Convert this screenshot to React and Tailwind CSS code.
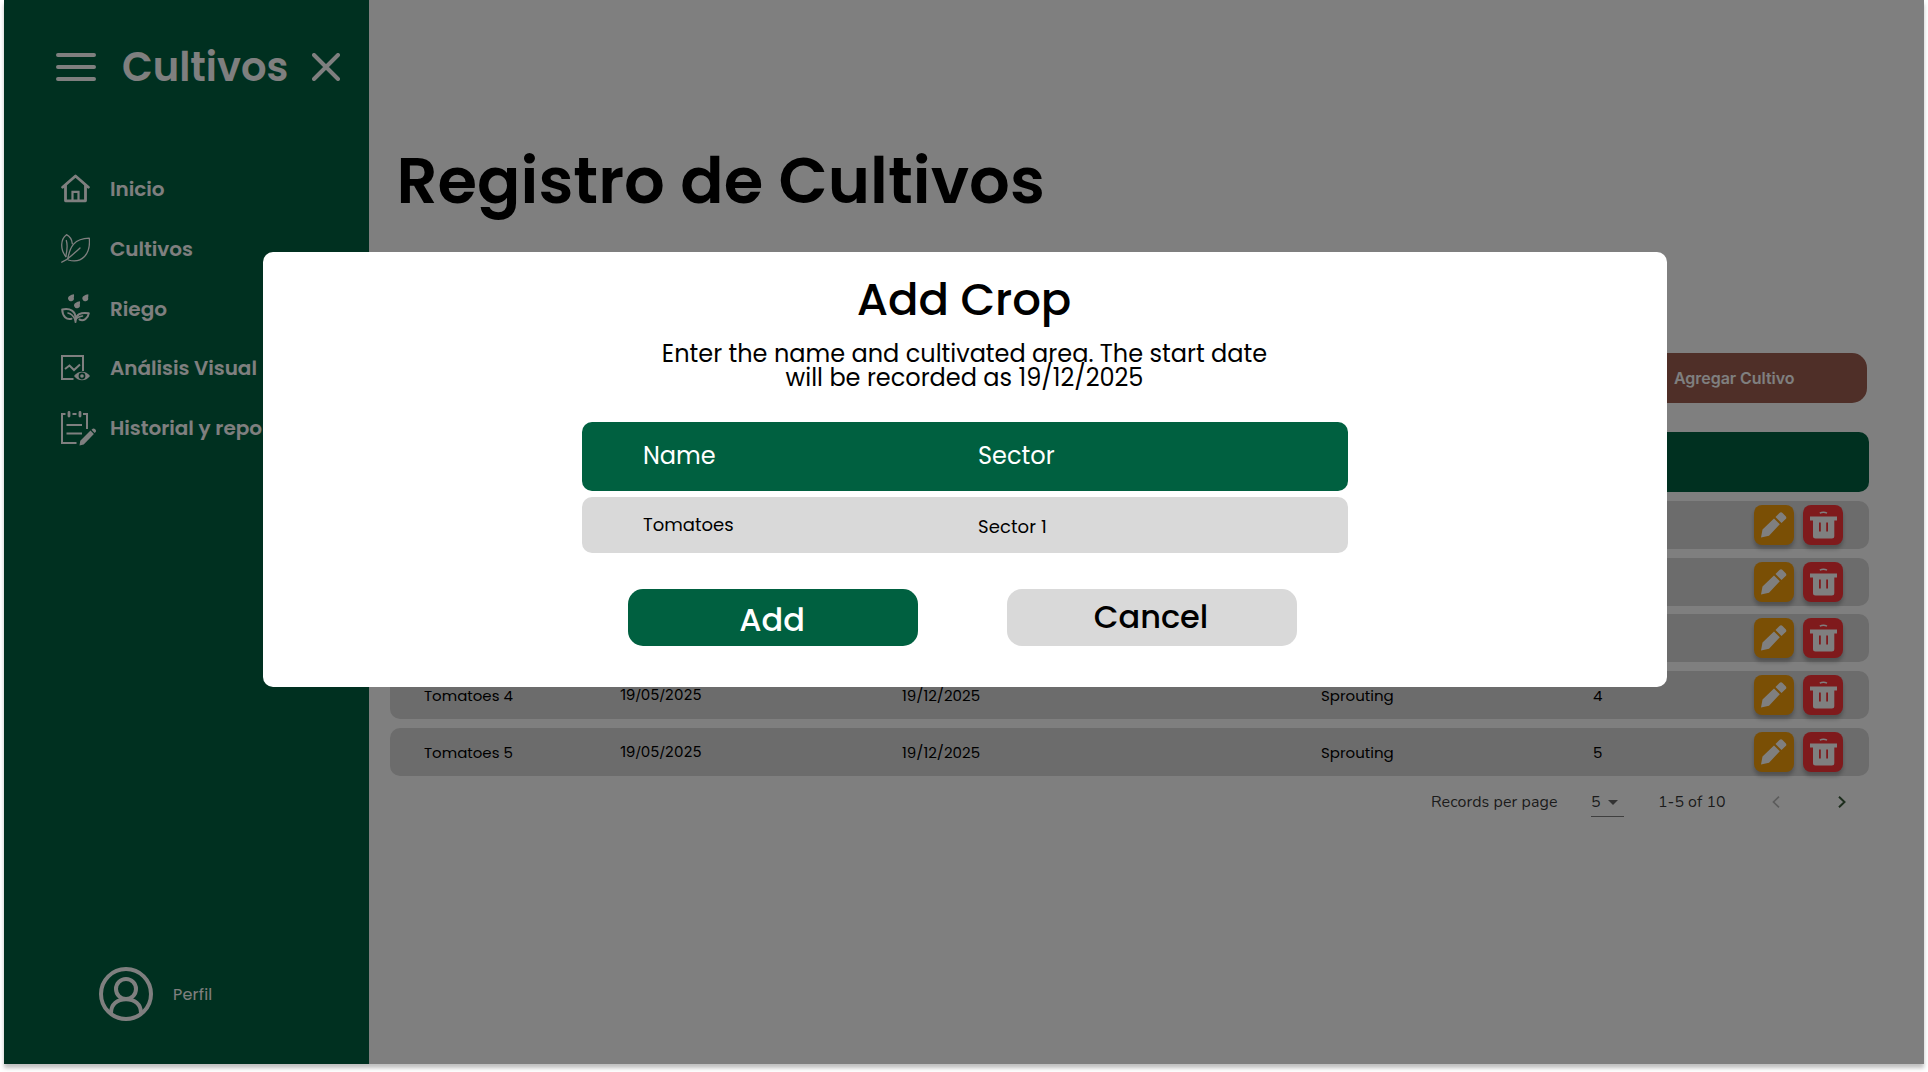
const rows = [1, 2, 3, 4, 5];

function Hamburger() {
  return (
    <svg className="h-7 w-10" viewBox="0 0 40 28" stroke="white" strokeWidth="4" strokeLinecap="round">
      <path d="M2 2H38M2 14H38M2 26H38" />
    </svg>
  );
}

function Close() {
  return (
    <svg className="h-7 w-7" viewBox="0 0 28 28" stroke="white" strokeWidth="4" strokeLinecap="round">
      <path d="M2 2L26 26M26 2L2 26" />
    </svg>
  );
}

function House() {
  return (
    <svg className="h-[29px] w-[29px]" viewBox="0 0 29 29" fill="none" stroke="white" strokeWidth="2.8" strokeLinejoin="round" strokeLinecap="round">
      <path d="M1.6 13.2L14.5 2L27.4 13.2" />
      <path d="M4.5 11.5V26.8H24.5V11.5" />
      <path d="M11.500 26V17.800H17.500V26" strokeWidth="2.2" strokeLinejoin="miter" />
    </svg>
  );
}

function Leaves() {
  return (
    <svg className="h-[29px] w-[29px]" viewBox="0 0 29 29" fill="none" stroke="white" strokeWidth="1.3" strokeLinecap="round" strokeLinejoin="round">
      <path d="M.8 28.2C4.5 26.5 7.5 24.5 10 22C13.5 19 16.5 16.5 19 14" />
      <path d="M6.8 24.5C9 13 13 4.5 28.3 4.2C29.8 20 21 30 7.2 26" />
      <path d="M4.8 22.5C-1 15.5-.5 5 5.5.7C9 2.5 11 6 11.3 9.8" />
      <path d="M5.3 6.5C6.8 11 6.5 15 4.8 22.5" />
    </svg>
  );
}

function Irrigation() {
  return (
    <svg className="h-[29px] w-[29px]" viewBox="0 0 29 29" fill="none" stroke="white" strokeWidth="2" strokeLinecap="round" strokeLinejoin="round">
      <g fill="white" stroke="none">
        <path d="M13 .2Q13.200 2 12.800 3.500A2.900 2.900 0 1 1 8.400 1.900Q10.500.6 13 .2Z" />
        <path d="M27.300 .2Q27.500 2 27.100 3.500A2.900 2.900 0 1 1 22.700 1.900Q24.800.6 27.300 .2Z" />
        <path d="M19 7.200Q19.200 9 18.800 10.500A2.900 2.900 0 1 1 14.400 8.900Q16.500 7.600 19 7.200Z" />
      </g>
      <path d="M14.5 28V24C14.5 17 9.5 14 1.2 15.5C1.500 22.500 5.500 26 10.500 24.800" />
      <path d="M14.5 26C15 21 19.5 17.7 27.8 19.300C27 24.500 22.500 27.500 18.500 25.500" />
      <path d="M7 19C9.5 19.5 12.5 22 14.3 26C16 23.5 18.500 22.300 21.500 22" strokeWidth="1.6" />
    </svg>
  );
}

function ChartEye() {
  return (
    <svg className="h-[27px] w-[29px]" viewBox="0 0 29 27" fill="none" stroke="white" strokeWidth="2">
      <path d="M12.5 24H1V1H22V16" />
      <path d="M4 14L8.500 10.500L13 15L19 9.500" />
      <path d="M13 21C17 15.300 25 15.300 29 21C25 26.700 17 26.700 13 21Z" fill="white" stroke="none" />
      <circle cx="21" cy="21" r="2.6" stroke="#006040" strokeWidth="1.6" />
    </svg>
  );
}

function NotePencil() {
  return (
    <svg className="h-[35px] w-[35px]" viewBox="0 0 35 35" fill="none" stroke="white" strokeWidth="2">
      <path d="M4.5 3H1V32H15.500M11.500 3H15.500M22 3H26V18" />
      <path d="M5.5 14H21M5.500 22.500H21" />
      <path d="M8 1.500V5M19 1.500V5" strokeWidth="2.8" strokeLinecap="round" />
      <path d="M18.5 34.500L19.300 29.800L29.500 19.600L32.900 23L22.700 33.500ZM30.500 18.800L31.700 17.700Q33 17 34.200 18.300Q35.500 19.600 34.700 20.900L33.600 22Z" fill="white" stroke="none" />
    </svg>
  );
}

function Profile() {
  return (
    <svg className="h-[54px] w-[54px]" viewBox="0 0 54 54" fill="none" stroke="white" strokeWidth="4">
      <circle cx="27" cy="27" r="25" />
      <circle cx="27" cy="22" r="10" />
      <path d="M12 46C12 37 18.5 32.3 27 32.3S42 37 42 46" />
    </svg>
  );
}

function Pencil() {
  return (
    <svg className="h-[26px] w-[26px]" viewBox="0 0 26 26" fill="white">
      <path d="M0 25.500L1.500 17.500L13 6.500L18.800 12.300L8 23.800ZM14.500 5L18.500 1Q20-.3 21.500 1L24.700 4.200Q26 5.700 24.700 7L20.500 11Z" />
    </svg>
  );
}

function Trash() {
  return (
    <svg className="h-[28px] w-[27px]" viewBox="0 0 27 28" fill="white">
      <path d="M9.8 2.2Q13.400.2 17 2.200" fill="none" stroke="white" strokeWidth="1.5" />
      <path fillRule="evenodd" d="M0 5.500H27V9.500H24.300V25Q24.300 27.500 21.800 27.500H5.500Q3 27.500 3 25V9.500H0ZM9 11.500V20.500H10.800V11.500ZM16.200 11.500V20.500H18V11.500Z" />
    </svg>
  );
}

const nav = [
  { icon: House, label: "Inicio" },
  { icon: Leaves, label: "Cultivos" },
  { icon: Irrigation, label: "Riego" },
  { icon: ChartEye, label: "Análisis Visual" },
  { icon: NotePencil, label: "Historial y reportes" },
];

function Sidebar() {
  return (
    <aside className="flex h-full w-[365px] shrink-0 flex-col bg-[#006040] text-white">
      <div className="mt-[47px] flex h-10 items-center pl-[52px]">
        <Hamburger />
        <h2 className="ml-[26px] w-[190px] whitespace-nowrap text-[40px] leading-10 font-semibold">Cultivos</h2>
        <Close />
      </div>
      <nav className="mt-[72px] flex flex-col pl-[57px]">
        {nav.map(({ icon: Icon, label }) => (
          <a key={label} className="flex h-[59.8px] items-center nth-3:pt-px">
            <span className="flex w-[49px]"><Icon /></span>
            <span className="whitespace-nowrap text-xl font-semibold tracking-[-0.03px]">{label}</span>
          </a>
        ))}
      </nav>
      <div className="mt-auto mb-[43px] flex items-center pl-[95px]">
        <Profile />
        <span className="ml-5 pt-0.5 text-base tracking-[0.2px]">Perfil</span>
      </div>
    </aside>
  );
}

function CropTable() {
  return (
    <div className="w-[1479px]">
      <div className="flex h-[60px] rounded-[10px] bg-[#006040]" />
      {rows.map((n) => (
        <div key={n} className="mt-[8.8px] flex h-12 items-center rounded-[10px] bg-[#d9d9d9] pl-[34px] text-[15px] text-black">
          <span className="w-[196px] pt-[3px]">Tomatoes {n}</span>
          <span className="w-[282px] font-['Inter']">19/05/2025</span>
          <span className="w-[419px] pt-[3px]">19/12/2025</span>
          <span className="w-[271px] pt-[3px]">Sprouting</span>
          <span className="w-[162px] pt-0.5 pl-px">{n}</span>
          <button className="flex h-10 w-10 items-center justify-center rounded-lg bg-[#f59e0b] shadow-[0_4px_4px_rgba(0,0,0,0.25)]"><Pencil /></button>
          <button className="ml-[9px] flex h-10 w-10 items-center justify-center rounded-lg bg-[#ff3439] shadow-[0_4px_4px_rgba(0,0,0,0.25)]"><Trash /></button>
        </div>
      ))}
    </div>
  );
}

function Pager() {
  return (
    <div className="mt-[9px] flex h-8 items-center pl-[1041px] font-['Nunito','Nunito_Sans'] text-base text-black/80">
      <span className="w-40 pt-0.5 tracking-[0.08px]">Records per page</span>
      <span className="mt-1 mr-[34px] flex h-7 w-[33px] items-center justify-between border-b border-black/50 pr-1.5">
        <span className="pb-px">5</span>
        <svg className="h-[5px] w-2.5" viewBox="0 0 10 5" fill="black" fillOpacity="0.6"><path d="M0 0H10L5 5Z" /></svg>
      </span>
      <span className="w-[114px] pt-[3px]">1-5 of 10</span>
      <svg className="mt-0.5 h-3 w-2" viewBox="0 0 8 12" fill="none" stroke="black" strokeOpacity="0.28" strokeWidth="1.7"><path d="M7 .7L1.5 6L7 11.3" /></svg>
      <svg className="mt-0.5 ml-[58px] h-3 w-2" viewBox="0 0 8 12" fill="none" stroke="#3c5c3c" strokeWidth="2"><path d="M1 .7L6.5 6L1 11.3" /></svg>
    </div>
  );
}

function Modal() {
  return (
    <div className="absolute inset-x-0 top-0 flex h-[1064px] bg-black/50">
      <section className="mt-[252px] ml-[259px] flex h-[435px] w-[1404px] flex-col items-center rounded-[10px] bg-white text-black">
        <h3 className="mt-[23px] mr-0.5 text-[45px] leading-[50px] font-medium tracking-[-0.1px]">Add Crop</h3>
        <p className="mt-[17px] mr-px w-[640px] text-center text-2xl leading-6">Enter the name and cultivated area. The start date will be recorded as 19/12/2025</p>
        <div className="mt-8 flex h-[69px] w-[766px] items-center rounded-[10px] bg-[#006040] pb-px pl-[61px] text-2xl text-white">
          <span className="w-[335px]">Name</span>
          <span>Sector</span>
        </div>
        <div className="mt-1.5 flex h-14 w-[766px] items-center rounded-[10px] bg-[#d9d9d9] pl-[61px] text-lg">
          <span className="w-[335px]">Tomatoes</span>
          <span className="pt-1 tracking-[0.1px]">Sector 1</span>
        </div>
        <div className="mt-9 mr-1 flex w-[670px] gap-[89px] text-[32px] leading-8 font-medium">
          <button className="h-[57px] w-[290px] rounded-[15px] bg-[#006040] pt-[5px] pr-0.5 text-white">Add</button>
          <button className="h-[57px] w-[290px] rounded-[15px] bg-[#d9d9d9] pr-0.5 pb-px">Cancel</button>
        </div>
      </section>
    </div>
  );
}

export default function App() {
  return (
    <div className="h-[1072px] w-[1928px] overflow-hidden bg-white px-1 font-['Poppins','Inter',sans-serif]">
      <div className="relative flex h-[1064px] w-[1920px] bg-white shadow-[0_4px_4px_rgba(0,0,0,0.25)]">
        <Sidebar />
        <main className="flex flex-col pl-[21px]">
          <h1 className="mt-[141px] ml-[6.5px] text-[64px] leading-[80px] font-semibold tracking-[0.05px]">Registro de Cultivos</h1>
          <button className="mt-[132px] ml-[1100px] h-[50px] w-[377px] rounded-[15px] bg-[#9e5e50] pl-[184px] text-left font-['Inter'] text-base font-semibold tracking-[-0.05px] text-white">Agregar Cultivo</button>
          <div className="mt-[29px]"><CropTable /></div>
          <Pager />
        </main>
        <Modal />
      </div>
    </div>
  );
}
